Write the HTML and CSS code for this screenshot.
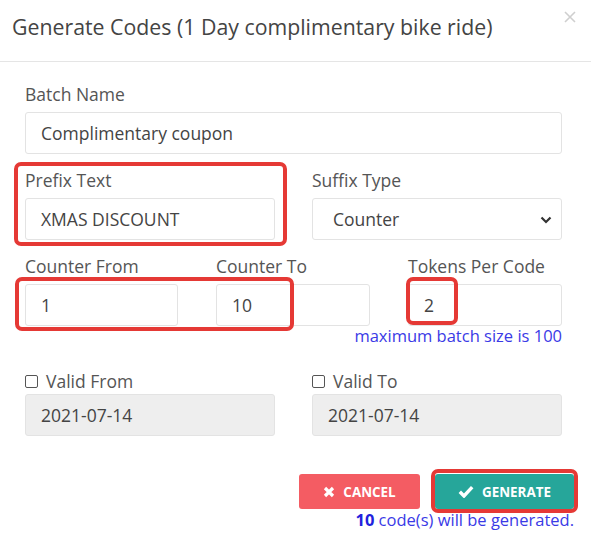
FILE: index.html
```html
<!DOCTYPE html>
<html>
<head>
<meta charset="utf-8">
<link rel="stylesheet" href="styles.css">
</head>
<body>
<div class="modal">
  <div class="modal-header">
    <h4 class="modal-title">Generate Codes (1 Day complimentary bike ride)</h4>
    <svg class="close" width="12" height="12" viewBox="0 0 12 12"><path d="M1 1L11 11M11 1L1 11" stroke="#cfcfcf" stroke-width="1.6" fill="none"/></svg>
  </div>
  <div class="modal-body">
    <div class="field">
      <label class="lbl">Batch Name</label>
      <div class="input">Complimentary coupon</div>
    </div>
    <div class="row two">
      <div class="field hl">
        <label class="lbl">Prefix Text</label>
        <div class="input">XMAS DISCOUNT</div>
        <div class="mark mark-prefix"></div>
      </div>
      <div class="field">
        <label class="lbl">Suffix Type</label>
        <div class="input select">Counter
          <svg class="chev" width="12" height="8" viewBox="0 0 12 8"><path d="M1.5 1.5L6 6L10.5 1.5" stroke="#333" stroke-width="2.2" fill="none"/></svg>
        </div>
      </div>
    </div>
    <div class="row three">
      <div class="pair">
        <div class="field">
          <label class="lbl">Counter From</label>
          <div class="input">1</div>
        </div>
        <div class="field">
          <label class="lbl">Counter To</label>
          <div class="input">10</div>
        </div>
        <div class="mark mark-counter"></div>
      </div>
      <div class="field hl">
        <label class="lbl">Tokens Per Code</label>
        <div class="input">2</div>
        <div class="mark mark-tokens"></div>
      </div>
    </div>
    <div class="hint">maximum batch size is 100</div>
    <div class="row two dates">
      <div class="field">
        <label class="lbl chk"><span class="box"></span>Valid From</label>
        <div class="input disabled">2021-07-14</div>
      </div>
      <div class="field">
        <label class="lbl chk"><span class="box"></span>Valid To</label>
        <div class="input disabled">2021-07-14</div>
      </div>
    </div>
  </div>
  <div class="modal-footer">
    <div class="buttons">
      <button class="btn cancel"><svg width="12" height="12" viewBox="0 0 12 12"><path d="M2 2L10 10M10 2L2 10" stroke="#fff" stroke-width="3.2" fill="none"/></svg>CANCEL</button>
      <button class="btn generate"><svg width="16" height="13" viewBox="0 0 16 13"><path d="M1.8 6.8L6 11L14.2 2.2" stroke="#fff" stroke-width="3.4" fill="none"/></svg>GENERATE<span class="mark mark-gen"></span></button>
    </div>
    <div class="count"><b>10</b> code(s) will be generated.</div>
  </div>
</div>
</body>
</html>
```
FILE: styles.css
```css
* { box-sizing: border-box; }
body {
  margin: 0;
  background: #fff;
  font-family: "Open Sans", "Noto Sans", sans-serif;
  color: #555;
}
.modal { width: 591px; }
.modal-header {
  height: 62px;
  border-bottom: 1px solid #e5e5e5;
  display: flex;
  justify-content: space-between;
  align-items: flex-start;
  padding: 12px 15px 0 12px;
}
.modal-title {
  margin: 0;
  font-size: 21.3px;
  line-height: 30px;
  font-weight: 400;
  color: #444;
}
.close { margin-top: -1px; }
.modal-body {
  width: 537px;
  margin-left: 25px;
  padding-top: 21px;
}
.field { position: relative; display: flex; flex-direction: column; }
.lbl {
  font-size: 17.5px;
  line-height: 22px;
  margin-bottom: 7px;
  color: #555;
}
.input {
  height: 42px;
  border: 1px solid #e3e3e3;
  border-radius: 3px;
  padding: 0 15px;
  font-size: 17.5px;
  line-height: 40px;
  color: #444;
  background: #fff;
  position: relative;
}
.input.disabled { background: #eee; border-color: #e3e3e3; }
.select { padding-left: 20px; }
.chev { position: absolute; right: 9px; top: 17px; }
.row { display: grid; margin-top: 15px; }
.two { grid-template-columns: 250px 250px; column-gap: 37px; }
.three { grid-template-columns: 345px 154px; column-gap: 38px; }
.pair { position: relative; display: grid; grid-template-columns: 153px 154px; column-gap: 38px; }
.hint {
  text-align: right;
  font-size: 16.5px;
  line-height: 20px;
  color: #3a3ae6;
}
.dates { margin-top: 24px; }
.lbl.chk { display: flex; align-items: center; margin-bottom: 2px; }
.box {
  width: 13px; height: 13px;
  border: 1px solid #555;
  border-radius: 2px;
  margin-right: 8px;
}
.mark {
  position: absolute;
  border: 4px solid #e53935;
  border-radius: 7px;
  pointer-events: none;
}
.mark-prefix { left: -11px; top: -7px; right: -12px; bottom: -6px; }
.mark-counter { left: -10px; top: 22px; right: 76px; bottom: -5px; }
.mark-tokens { left: -2px; top: 22px; width: 52px; bottom: 1px; }
.modal-footer {
  padding: 38px 17px 0 0;
  display: flex;
  flex-direction: column;
  align-items: flex-end;
}
.buttons { display: flex; gap: 15px; }
.btn {
  position: relative;
  height: 35px;
  border: 0;
  border-radius: 3px;
  color: #fff;
  font-family: "Open Sans", sans-serif;
  font-weight: 700;
  font-size: 13.4px;
  display: flex;
  align-items: center;
  justify-content: center;
  gap: 8px;
  padding: 0;
}
.cancel { width: 121px; background: #f45c63; }
.generate { width: 139px; background: #26a69a; }
.mark-gen { left: -4px; top: -5px; right: -4px; bottom: -4px; }
.count {
  margin-top: 1px;
  font-size: 16.5px;
  line-height: 20px;
  color: #3a3ae6;
}
.count b { color: #2222dd; }
```
